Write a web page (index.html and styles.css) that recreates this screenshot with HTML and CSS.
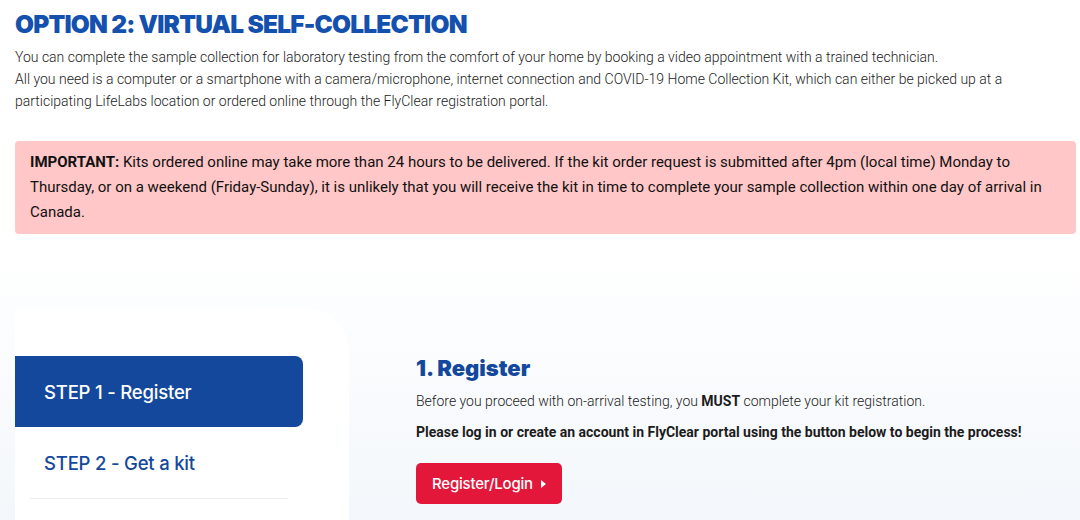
FILE: index.html
```html
<!DOCTYPE html>
<html lang="en">
<head>
  <meta charset="UTF-8" />
  <meta name="viewport" content="width=device-width, initial-scale=1.0" />
  <title>Virtual Self-Collection</title>
  <link rel="stylesheet" href="styles.css">
</head>
<body>
  <div class="intro">
    <h1>OPTION 2: VIRTUAL SELF-COLLECTION</h1>
    <p>You can complete the sample collection for laboratory testing from the comfort of your home by booking a video appointment with a trained technician.<br>
    All you need is a computer or a smartphone with a camera/microphone, internet connection and COVID-19 Home Collection Kit, which can either be picked up at a participating LifeLabs location or ordered online through the FlyClear registration portal.</p>

    <div class="alert">
      <strong>IMPORTANT:</strong> Kits ordered online may take more than 24 hours to be delivered. If the kit order request is submitted after 4pm (local time) Monday to Thursday, or on a weekend (Friday-Sunday), it is unlikely that you will receive the kit in time to complete your sample collection within one day of arrival in Canada.
    </div>
  </div>

  <div class="steps">
    <div class="steps-nav">
      <div class="step-tab active">STEP 1 - Register</div>
      <div class="step-tab">STEP 2 - Get a kit</div>
      <div class="divider"></div>
    </div>

    <div class="step-content">
      <h2>1. Register</h2>
      <p>Before you proceed with on-arrival testing, you <strong>MUST</strong> complete your kit registration.</p>
      <p class="strong">Please log in or create an account in FlyClear portal using the button below to begin the process!</p>
      <button class="btn">Register/Login <span class="arrow"></span></button>
    </div>
  </div>
</body>
</html>
```

FILE: styles.css
```css
body {
  margin: 0;
  font-family: Roboto, "Liberation Sans", sans-serif;
  color: #222;
  background: #fff;
}
.intro {
  padding: 0 4px 0 15px;
}
h1 {
  margin: 9px 0 0;
  font-family: Inter, sans-serif;
  font-weight: 900;
  font-size: 24.5px;
  line-height: 30px;
  letter-spacing: -0.8px;
  color: #1450ad;
}
.intro p {
  margin: 7px 0 0;
  font-size: 14px;
  line-height: 22px;
  font-weight: 300;
  color: #1c1c1c;
}
.alert {
  margin-top: 29px;
  padding: 9px 15px;
  background: #ffc7c7;
  border-radius: 4px;
  font-size: 15px;
  line-height: 25px;
  color: #111;
}
.steps {
  display: flex;
  margin-top: 16px;
  padding: 59px 0 0 15px;
  height: 211px;
  background: linear-gradient(#fff, #f3f7fb);
}
.steps-nav {
  width: 334px;
  padding-top: 47px;
  background: #fff;
  border-radius: 6px 42px 0 0;
}
.step-tab {
  width: 259px;
  height: 71px;
  padding-left: 29px;
  display: flex;
  align-items: center;
  font-family: Inter, sans-serif;
  font-weight: 500;
  font-size: 18.5px;
  letter-spacing: -0.2px;
  color: #14489c;
}
.step-tab.active {
  background: #14489c;
  color: #fff;
  border-radius: 0 8px 8px 0;
}
.divider {
  margin-left: 15px;
  width: 258px;
  border-top: 1px solid #ececec;
}
.step-content {
  margin-left: 67px;
  padding-top: 47px;
}
.step-content h2 {
  margin: 0;
  font-family: Inter, sans-serif;
  font-weight: 900;
  font-size: 22px;
  line-height: 24px;
  color: #14489c;
}
.step-content p {
  margin: 11px 0 0;
  font-size: 14px;
  line-height: 20px;
  font-weight: 300;
  color: #1c1c1c;
}
.step-content p strong {
  font-weight: 700;
}
.step-content p.strong {
  font-weight: 700;
}
.btn {
  margin-top: 21px;
  height: 41px;
  padding: 0 16px;
  border: none;
  border-radius: 5px;
  background: #e3173a;
  color: #fff;
  font-family: Inter, sans-serif;
  font-weight: 500;
  font-size: 15px;
  letter-spacing: -0.2px;
  display: flex;
  align-items: center;
  gap: 8px;
}
.arrow {
  width: 0;
  height: 0;
  border-top: 4px solid transparent;
  border-bottom: 4px solid transparent;
  border-left: 5px solid #fff;
}
```
